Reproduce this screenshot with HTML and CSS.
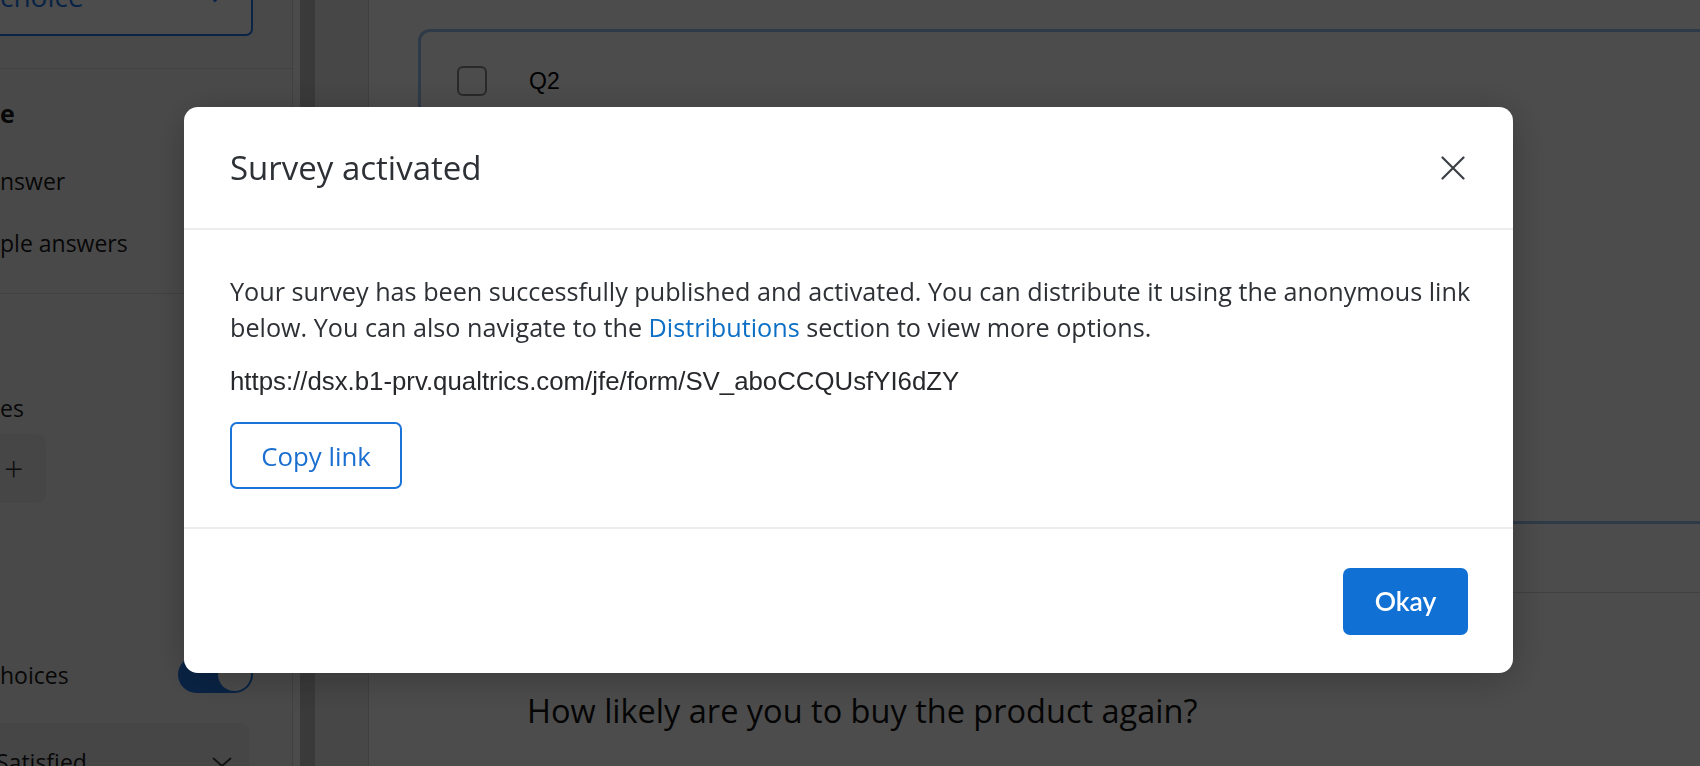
FILE: index.html
```html
<!DOCTYPE html>
<html>
<head>
<meta charset="utf-8">
<link rel="stylesheet" href="styles.css">
</head>
<body>
<div class="app">
  <aside class="panel">
    <div class="type-select">
      <span class="type-text">choice</span>
      <svg class="type-chev" width="20" height="12" viewBox="0 0 20 12"><path d="M2 2 L10 10 L18 2" fill="none" stroke="#2178e9" stroke-width="2"/></svg>
    </div>
    <div class="sep sep-top"></div>
    <div class="sec-title">e</div>
    <div class="opt opt-one">nswer</div>
    <div class="opt opt-multi">ple answers</div>
    <div class="sep sep-mid"></div>
    <div class="opt opt-choices">es</div>
    <div class="plus-box"><span class="plus">+</span></div>
    <div class="toggle-row">
      <span class="opt">hoices</span>
      <span class="toggle"><span class="knob"></span></span>
    </div>
    <div class="scale-select">
      <span>Satisfied</span>
      <svg width="22" height="12" viewBox="0 0 22 12"><path d="M2 2 L11 10 L20 2" fill="none" stroke="#444" stroke-width="2"/></svg>
    </div>
  </aside>
  <div class="scroll-strip"></div>
  <div class="gutter"></div>
  <main class="canvas">
    <section class="qcard">
      <div class="qhead">
        <span class="checkbox"></span>
        <span class="qid">Q2</span>
      </div>
    </section>
    <div class="qgap"></div>
    <section class="qcard2">
      <p class="qtext">How likely are you to buy the product again?</p>
    </section>
  </main>
</div>

<div class="overlay">
  <div class="modal">
    <header class="modal-head">
      <h2 class="modal-title">Survey activated</h2>
      <button class="close" aria-label="Close">
        <svg width="24" height="24" viewBox="0 0 24 24"><path d="M1.5 1.5 L22.5 22.5 M22.5 1.5 L1.5 22.5" stroke="#3b3f44" stroke-width="2.2" stroke-linecap="round"/></svg>
      </button>
    </header>
    <div class="modal-body">
      <p class="msg">Your survey has been successfully published and activated. You can distribute it using the anonymous link below. You can also navigate to the <a class="link" href="#">Distributions</a> section to view more options.</p>
      <p class="url">https://dsx.b1-prv.qualtrics.com/jfe/form/SV_aboCCQUsfYI6dZY</p>
      <button class="btn-outline">Copy link</button>
    </div>
    <footer class="modal-foot">
      <button class="btn-primary">Okay</button>
    </footer>
  </div>
</div>
</body>
</html>
```
FILE: styles.css
```css
* { box-sizing: border-box; }
html, body {
  margin: 0;
  padding: 0;
  width: 1700px;
  height: 766px;
  overflow: hidden;
  background: #ffffff;
  font-family: "Open Sans", "Liberation Sans", sans-serif;
}

.app {
  display: flex;
  height: 766px;
  width: 1700px;
  color: #222;
}

/* left panel */
.panel {
  width: 293px;
  flex: 0 0 293px;
  border-right: 1px solid #d8d8d8;
  background: #f6f6f6;
  font-size: 23px;
  color: #1a1a1a;
}
.type-select {
  width: 253px;
  height: 50px;
  margin-top: -14px;
  border: 2px solid #2178e9;
  border-left: none;
  border-radius: 0 7px 7px 0;
  background: #fff;
  display: flex;
  align-items: flex-start;
  justify-content: space-between;
  padding: 0 26px 0 0;
}
.type-text { color: #2178e9; font-size: 28px; line-height: 1; margin-top: -6px; }
.type-chev { margin-top: 3px; }
.sep { height: 1px; background: #dcdcdc; }
.sep-top { margin-top: 32px; }
.sec-title { font-weight: 700; font-size: 25px; margin-top: 28px; line-height: 32px; }
.opt { line-height: 32px; }
.opt-one { margin-top: 36px; }
.opt-multi { margin-top: 30px; }
.sep-mid { margin-top: 34px; }
.opt-choices { margin-top: 98px; }
.plus-box {
  width: 46px;
  height: 69px;
  margin-top: 10px;
  background: #ececec;
  border-radius: 0 8px 8px 0;
  display: flex;
  align-items: center;
  padding-left: 4px;
}
.plus { font-size: 34px; font-weight: 300; color: #333; line-height: 1; }
.toggle-row {
  margin-top: 153px;
  width: 253px;
  display: flex;
  align-items: center;
  justify-content: space-between;
}
.toggle {
  width: 75px;
  height: 37px;
  border-radius: 19px;
  background: #2178e9;
  display: flex;
  align-items: center;
  justify-content: flex-end;
  padding: 2px;
}
.knob { width: 33px; height: 33px; border-radius: 50%; background: #fff; }
.scale-select {
  margin-top: 30px;
  width: 253px;
  height: 70px;
  background: #ececec;
  border-radius: 0 8px 0 0;
  display: flex;
  align-items: center;
  justify-content: space-between;
  padding: 8px 16px 0 0;
  margin-left: -4px;
}
.scroll-strip { width: 7px; flex: 0 0 7px; background: #fafafa; }
.gutter {
  width: 69px;
  flex: 0 0 69px;
  background: #ededed;
  border-left: 15px solid #c2c2c2;
  border-right: 1px solid #d6d6d6;
}
.canvas {
  flex: 1;
  background: #fdfdfd;
  padding: 29px 0 0 49px;
  overflow: hidden;
}
.qcard {
  height: 495px;
  border: 3px solid #9ec3f2;
  border-right: none;
  border-radius: 12px 0 0 12px;
  background: #fff;
  padding: 34px 0 0 36px;
}
.qhead { display: flex; align-items: center; gap: 42px; }
.checkbox {
  width: 30px;
  height: 30px;
  border: 2px solid #8a8a8a;
  border-radius: 6px;
}
.qid { font-size: 23px; font-weight: 400; color: #000; font-family: "Liberation Sans", sans-serif; }
.qgap { height: 69px; border-bottom: 1px solid #d9d9d9; margin-left: -49px; }
.qcard2 { padding: 0 0 0 60px; }
.qtext {
  margin: 100px 0 0 49px;
  font-size: 32.5px;
  color: #111;
  line-height: 36px;
}

/* overlay + modal */
.overlay {
  position: fixed;
  inset: 0;
  background: rgba(0, 0, 0, 0.7);
  display: flex;
  justify-content: center;
  align-items: flex-start;
  padding: 107px 3px 0 0;
}
.modal {
  width: 1329px;
  height: 566px;
  background: #fff;
  border-radius: 14px;
  box-shadow: 0 6px 40px rgba(0, 0, 0, 0.25);
  display: flex;
  flex-direction: column;
  color: #2d3035;
}
.modal-head {
  height: 123px;
  flex: 0 0 123px;
  border-bottom: 2px solid #ececee;
  display: flex;
  align-items: center;
  justify-content: space-between;
  padding: 0 48px 0 46px;
}
.modal-title {
  margin: 0;
  font-size: 33px;
  font-weight: 400;
  color: #2d3035;
}
.close {
  background: none;
  border: none;
  padding: 0;
  width: 24px;
  height: 24px;
  display: flex;
  cursor: pointer;
}
.modal-body {
  flex: 0 0 299px;
  padding: 43px 30px 0 46px;
  border-bottom: 2px solid #ececee;
}
.msg {
  margin: 0;
  font-size: 25.2px;
  line-height: 36px;
  color: #2d3035;
}
.link { color: #0b6fc6; text-decoration: none; }
.url {
  margin: 18px 0 0 0;
  font-family: "Liberation Sans", Arial, sans-serif;
  font-size: 25.8px;
  line-height: 36px;
  color: #26282b;
}
.btn-outline {
  margin-top: 23px;
  width: 172px;
  height: 67px;
  border: 2px solid #1a73d9;
  border-radius: 7px;
  background: #fff;
  color: #1a6fd0;
  font-family: "Open Sans", sans-serif;
  font-size: 25.8px;
  padding: 0;
  cursor: pointer;
}
.modal-foot {
  flex: 1;
  display: flex;
  align-items: center;
  justify-content: flex-end;
  padding: 0 45px 0 46px;
}
.btn-primary {
  width: 125px;
  height: 67px;
  border: none;
  border-radius: 7px;
  background: #1170d4;
  color: #fff;
  font-family: "Lato", sans-serif;
  font-weight: 600;
  font-size: 26.5px;
  padding: 0;
  cursor: pointer;
}
```
